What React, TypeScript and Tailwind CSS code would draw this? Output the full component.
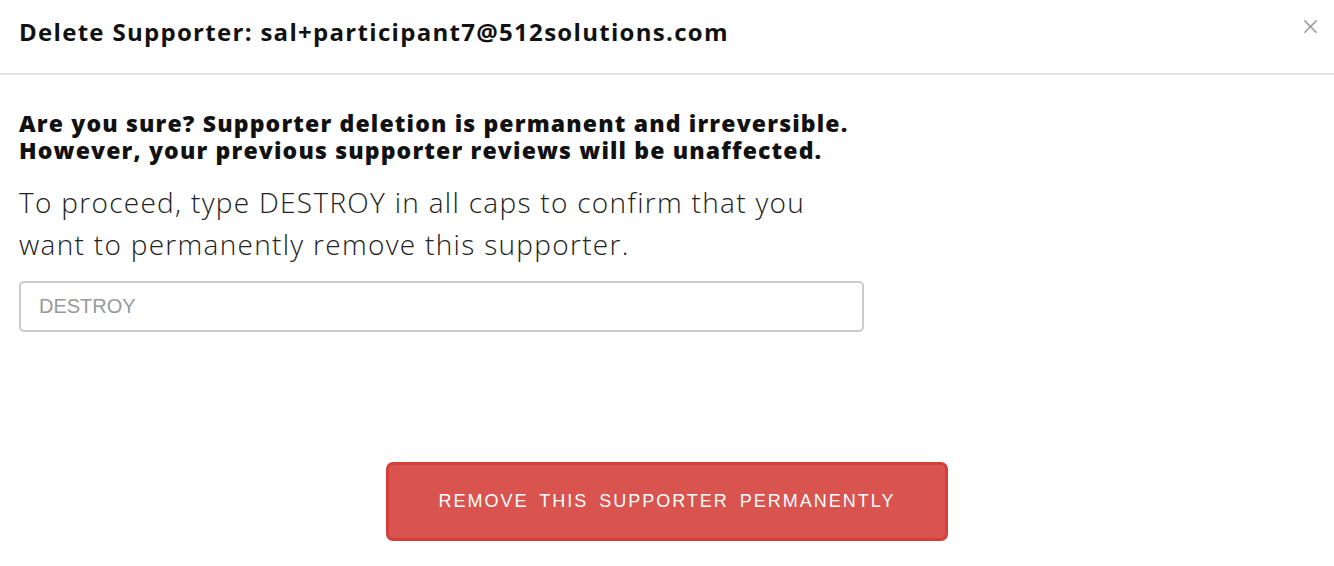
import React, { useState } from 'react';

const CloseIcon: React.FC<{ className?: string }> = ({ className }) => (
    <svg className={className} viewBox="0 0 16 16" fill="none" stroke="currentColor" strokeWidth="1.6" strokeLinecap="square">
        <line x1="2" y1="2" x2="14" y2="14" />
        <line x1="14" y1="2" x2="2" y2="14" />
    </svg>
);

export default function App() {
    const [confirmText, setConfirmText] = useState('');

    return (
        <div className="w-[1334px] h-[566px] bg-white font-['Open_Sans',sans-serif] text-[#111]">
            {/* Header */}
            <div className="h-[75px] border-b-2 border-[#e5e5e5] flex items-center justify-between pl-[19px] pr-[16px]">
                <h2 className="text-[24px] font-bold tracking-[1.3px] leading-none pb-[10px]">
                    Delete Supporter: sal+participant7@512solutions.com
                </h2>
                <button className="text-[#9a9a9a] pb-[21px]">
                    <CloseIcon className="w-[15px] h-[15px]" />
                </button>
            </div>

            {/* Body */}
            <div className="px-[19px] pt-[35px]">
                <div className="w-[845px]">
                    <p className="text-[23px] font-extrabold tracking-[1.15px] leading-[27px]">
                        Are you sure? Supporter deletion is permanent and irreversible.
                        <br />
                        However, your previous supporter reviews will be unaffected.
                    </p>
                    <p className="mt-[17px] text-[28px] font-light tracking-[1.3px] leading-[42px] text-[#222]">
                        To proceed, type DESTROY in all caps to confirm that you want to permanently remove this supporter.
                    </p>
                    <input
                        value={confirmText}
                        onChange={e => setConfirmText(e.target.value)}
                        placeholder="DESTROY"
                        className="mt-[16px] w-full h-[51px] border-2 border-[#ccc] rounded-[5px] px-[18px] text-[20px] font-['Liberation_Sans',sans-serif] text-[#333] placeholder:text-[#999] outline-none"
                    />
                </div>

                <div className="flex justify-center mt-[130px]">
                    <button className="w-[562px] h-[79px] bg-[#d9534f] border-[3px] border-[#d43f3a] rounded-[7px] text-white font-['Liberation_Sans',sans-serif] text-[18px] tracking-[2px] [word-spacing:4px] uppercase">
                        Remove this supporter permanently
                    </button>
                </div>
            </div>
        </div>
    );
}
